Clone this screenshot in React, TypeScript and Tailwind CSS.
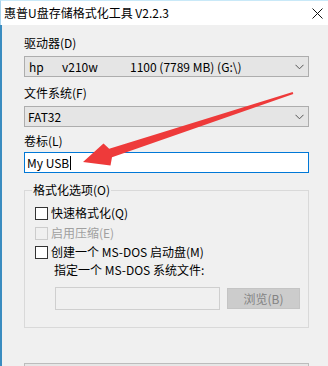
import React from "react";

function Chevron() {
  return (
    <svg width="9" height="6" viewBox="0 0 9 6" className="shrink-0">
      <polyline points="0.5,0.8 4.5,4.8 8.5,0.8" fill="none" stroke="#555" strokeWidth="1" />
    </svg>
  );
}

function Check({ disabled }: { disabled?: boolean }) {
  return (
    <span
      className={
        disabled
          ? "block w-[13px] h-[13px] border border-[#cccccc] bg-[#f0f0f0] shrink-0"
          : "block w-[13px] h-[13px] border border-[#333333] bg-white shrink-0"
      }
    />
  );
}

export default function App() {
  return (
    <div className="relative w-[328px] h-[366px] overflow-hidden bg-[#f0f0f0] font-['Noto_Sans_CJK_SC',sans-serif] text-[12px] text-black">
      <div className="flex h-[25px] items-center justify-between border-t border-t-[#c9e9f8] border-l border-l-[#a9d3ec] bg-white pl-[3px] pr-[5px]">
        <span className="leading-[14px]">惠普U盘存储格式化工具 V2.2.3</span>
        <svg width="11" height="11" viewBox="0 0 11 11">
          <path d="M0.5 0.5L10.5 10.5M10.5 0.5L0.5 10.5" stroke="#111" strokeWidth="1" />
        </svg>
      </div>
      <div className="flex flex-col border-l-2 border-l-[#3a8cc0] pl-[22px] pr-[19px] pb-[20px]">
        <div className="mt-[11px] shrink-0 leading-[14px]">驱动器(D)</div>
        <div className="mt-[6px] flex h-[21px] shrink-0 items-center border border-[#adadad] bg-[#e5e5e5] pl-[4px] pr-[4px] leading-[14px]">
          <div className="flex flex-1">
            <span className="w-[33px]">hp</span>
            <span className="w-[68px]">v210w</span>
            <span>1100 (7789 MB) (G:\)</span>
          </div>
          <Chevron />
        </div>
        <div className="mt-[9px] shrink-0 leading-[14px]">文件系统(F)</div>
        <div className="mt-[6px] flex h-[21px] shrink-0 items-center border border-[#adadad] bg-[#e5e5e5] pl-[3px] pr-[4px] leading-[14px]">
          <span className="flex-1">FAT32</span>
          <Chevron />
        </div>
        <div className="mt-[7px] shrink-0 leading-[14px]">卷标(L)</div>
        <div className="mt-[4px] flex h-[21px] shrink-0 items-center border border-[#0078d7] bg-white pl-[2px] leading-[14px]">
          <span>My USB</span>
          <span className="ml-[1px] block h-[14px] w-[1px] bg-black" />
        </div>
        <fieldset className="mt-[11px] h-[144px] shrink-0 border border-[#d9d9d9] p-0 pl-[10px]">
          <legend className="ml-[-3px] px-[1px] leading-[12px]">格式化选项(O)</legend>
          <div className="mt-[10px] flex h-[14px] items-center gap-[3px] leading-[14px]">
            <Check />
            <span>快速格式化(Q)</span>
          </div>
          <div className="mt-[6px] flex h-[14px] items-center gap-[3px] leading-[14px] text-[#a0a0a0]">
            <Check disabled />
            <span>启用压缩(E)</span>
          </div>
          <div className="mt-[5px] flex h-[14px] items-center gap-[3px] leading-[14px]">
            <Check />
            <span>创建一个 MS-DOS 启动盘(M)</span>
          </div>
          <div className="mt-[4px] ml-[19px] h-[14px] leading-[14px]">指定一个 MS-DOS 系统文件:</div>
          <div className="mt-[10px] ml-[20px] flex items-center">
            <div className="h-[23px] w-[165px] border border-[#cfcfcf] bg-[#f0f0f0]" />
            <div className="ml-[7px] flex h-[21px] w-[73px] items-center justify-center border border-[#c4c4c4] bg-[#cccccc] leading-[14px] text-[#838383]">
              浏览(B)
            </div>
          </div>
        </fieldset>
        <div className="mt-[35px] h-[30px] shrink-0 border border-[#bcbcbc] bg-[#e6e6e6]" />
      </div>
      <svg className="pointer-events-none absolute left-0 top-0" width="328" height="366" viewBox="0 0 328 366">
        <polygon
          points="83,162 103.5,143.5 109.2,148.7 292.7,92.1 293.3,94 112,157.3 110.5,165.5"
          fill="#ee3a3a"
        />
      </svg>
    </div>
  );
}
